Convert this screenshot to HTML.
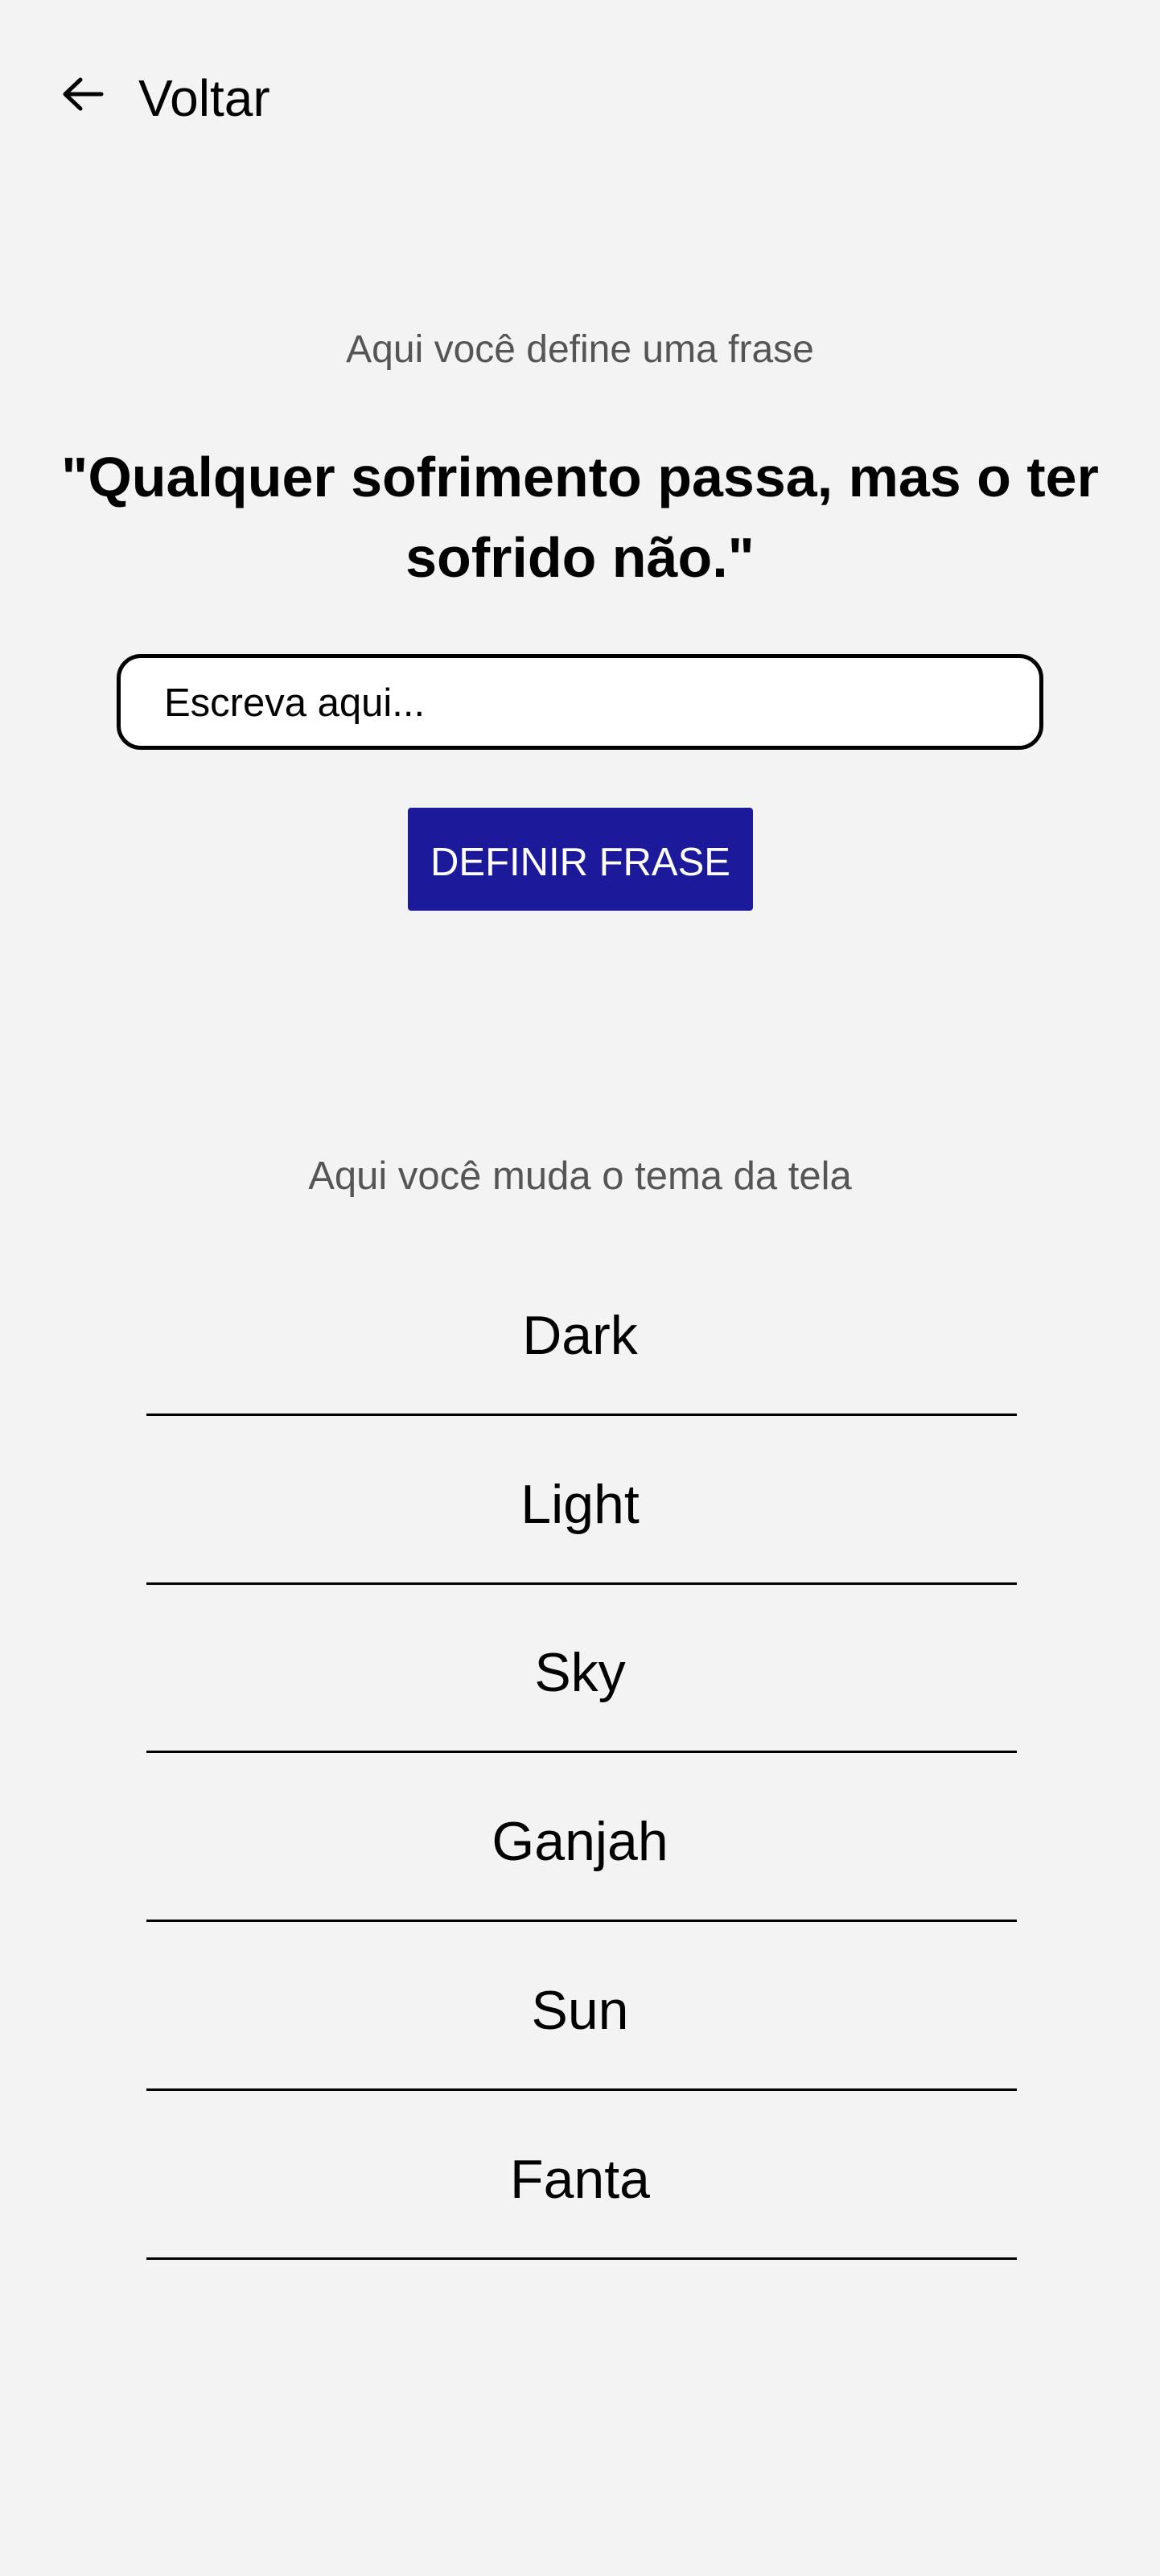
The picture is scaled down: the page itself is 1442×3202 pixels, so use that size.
<!DOCTYPE html>
<html><head><meta charset="utf-8"><style>
html,body{margin:0;padding:0;}
body{width:1442px;height:3202px;background:#f3f3f3;position:relative;overflow:hidden;font-family:"Liberation Sans",sans-serif;}
.a{position:absolute;line-height:1;white-space:nowrap;}
.c{left:0;width:1442px;text-align:center;}
.line{position:absolute;left:182px;width:1082px;height:3px;background:#000;}
.item{font-size:68px;color:#000;}
</style></head><body>
<svg style="position:absolute;left:76px;top:96px" width="54" height="42" viewBox="0 0 54 42"><path d="M50 21H6M24 3L5 21L24 39" fill="none" stroke="#000" stroke-width="5" stroke-linecap="round" stroke-linejoin="round"/></svg>
<div class="a" style="left:172px;top:90px;font-size:64px;color:#000">Voltar</div>
<div class="a c" style="top:411px;font-size:48px;color:#555">Aqui você define uma frase</div>
<div style="position:absolute;left:40px;width:1362px;top:543px;font-size:70px;font-weight:bold;line-height:100px;text-align:center;color:#000">"Qualquer sofrimento passa, mas o ter sofrido não."</div>
<div style="position:absolute;left:145px;top:813px;width:1142px;height:109px;border:5px solid #000;border-radius:30px;background:#fff"></div>
<div class="a" style="left:204px;top:850px;font-size:49px;color:#000">Escreva aqui...</div>
<div style="position:absolute;left:507px;top:1004px;width:429px;height:128px;background:#1c1a9a;border-radius:4px"></div>
<div class="a" style="left:507px;width:429px;text-align:center;top:1048px;font-size:49px;color:#fff">DEFINIR FRASE</div>
<div class="a c" style="top:1438px;font-size:49px;color:#555">Aqui você muda o tema da tela</div>
<div class="a c item" style="top:1626px">Dark</div><div class="line" style="top:1757px"></div>
<div class="a c item" style="top:1836px">Light</div><div class="line" style="top:1967px"></div>
<div class="a c item" style="top:2045px">Sky</div><div class="line" style="top:2176px"></div>
<div class="a c item" style="top:2255px">Ganjah</div><div class="line" style="top:2386px"></div>
<div class="a c item" style="top:2465px">Sun</div><div class="line" style="top:2596px"></div>
<div class="a c item" style="top:2675px">Fanta</div><div class="line" style="top:2806px"></div>
</body></html>
